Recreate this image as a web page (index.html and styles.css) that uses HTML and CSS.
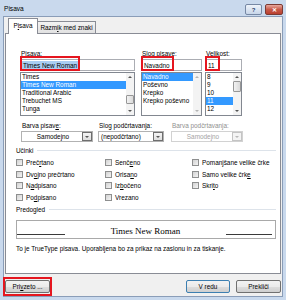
FILE: index.html
```html
<!DOCTYPE html>
<html lang="sl">
<head>
  <meta charset="UTF-8" />
  <title>Pisava</title>
  <link rel="stylesheet" href="styles.css">
</head>
<body>

  <div class="okno">
    <div class="naslov">
      <span class="naslov-besedilo">Pisava</span>
      <span class="gumb-pomoc">?</span>
      <span class="gumb-zapri">&#x2715;</span>
    </div>

    <div class="dialog">
      <div class="zavihki">
        <div class="zavihek izbran">P<u>i</u>sava</div>
        <div class="zavihek drugi">Razm<u>i</u>k med znaki</div>
      </div>

      <div class="plosca">
        <!-- pisava, slog, velikost -->
        <div class="vrsta-pisave">
          <div class="stolpec st-pisava">
            <label>P<u>i</u>sava:</label>
            <div class="polje">
              <span class="oznaceno">Times New Roman</span>
              <span class="rdeci-okvir okvir-pisava"></span>
            </div>
            <div class="seznam">
              <ul>
                <li>Times</li>
                <li class="izbran">Times New Roman</li>
                <li>Traditional Arabic</li>
                <li>Trebuchet MS</li>
                <li>Tunga</li>
              </ul>
              <div class="drsnik">
                <div class="puscica"><span class="gor"></span></div>
                <div class="steza"><div class="rocaj rocaj-pisava"></div></div>
                <div class="puscica"><span class="dol"></span></div>
              </div>
            </div>
          </div>

          <div class="stolpec st-slog">
            <label>Slog pisave:</label>
            <div class="polje">
              <span>Navadno</span>
              <span class="rdeci-okvir okvir-slog"></span>
            </div>
            <div class="seznam">
              <ul>
                <li class="izbran">Navadno</li>
                <li>Poševno</li>
                <li>Krepko</li>
                <li>Krepko poševno</li>
              </ul>
              <div class="drsnik onemogocen">
                <div class="puscica"><span class="gor"></span></div>
                <div class="steza"></div>
                <div class="puscica"><span class="dol"></span></div>
              </div>
            </div>
          </div>

          <div class="stolpec st-velikost">
            <label><u>V</u>elikost:</label>
            <div class="polje">
              <span>11</span>
              <span class="rdeci-okvir okvir-velikost"></span>
            </div>
            <div class="seznam">
              <ul>
                <li>8</li>
                <li>9</li>
                <li>10</li>
                <li class="izbran">11</li>
                <li>12</li>
              </ul>
              <div class="drsnik">
                <div class="puscica"><span class="gor"></span></div>
                <div class="steza"><div class="rocaj rocaj-velikost"></div></div>
                <div class="puscica"><span class="dol"></span></div>
              </div>
            </div>
          </div>
        </div>

        <!-- barve in podcrtavanje -->
        <div class="vrsta-barve">
          <div class="stolpec st-barva">
            <label>Barva pisav<u>e</u>:</label>
            <div class="spustni">
              <span class="spustni-besedilo sredina">Samodejno</span>
              <span class="spustni-gumb"><span class="dol"></span></span>
            </div>
          </div>
          <div class="stolpec st-podcrt">
            <label>Slog podčrtavanja:</label>
            <div class="spustni">
              <span class="spustni-besedilo">(nepodčrtano)</span>
              <span class="spustni-gumb"><span class="dol"></span></span>
            </div>
          </div>
          <div class="stolpec st-barva-podcrt sivo">
            <label>Barva podčrtavanja:</label>
            <div class="spustni onemogocen">
              <span class="spustni-besedilo sredina">Samodejno</span>
              <span class="spustni-gumb"><span class="dol"></span></span>
            </div>
          </div>
        </div>

        <div class="skupina">Učinki</div>
        <div class="ucinki">
          <div class="potrditev"><span class="kvadrat"></span>Preč<u>r</u>tano</div>
          <div class="potrditev"><span class="kvadrat"></span>Senč<u>e</u>no</div>
          <div class="potrditev"><span class="kvadrat"></span>Pomanjšane velike črke</div>
          <div class="potrditev"><span class="kvadrat"></span>Dv<u>o</u>jno prečrtano</div>
          <div class="potrditev"><span class="kvadrat"></span>Orisa<u>n</u>o</div>
          <div class="potrditev"><span class="kvadrat"></span>Samo velike črk<u>e</u></div>
          <div class="potrditev"><span class="kvadrat"></span>N<u>a</u>dpisano</div>
          <div class="potrditev"><span class="kvadrat"></span>Iz<u>b</u>očeno</div>
          <div class="potrditev"><span class="kvadrat"></span>Skri<u>t</u>o</div>
          <div class="potrditev"><span class="kvadrat"></span>Po<u>d</u>pisano</div>
          <div class="potrditev"><span class="kvadrat"></span>Vrezano</div>
        </div>

        <div class="skupina">Predogled</div>
        <div class="predogled">
          <span class="osnovnica levo"></span>
          <span class="vzorec">Times New Roman</span>
          <span class="osnovnica desno"></span>
        </div>
        <p class="opis">To je TrueType pisava. Uporabljena bo za prikaz na zaslonu in za tiskanje.</p>
      </div>

      <div class="gumbi">
        <button class="gumb gumb-privzeto">Pri<u>v</u>zeto ...<span class="rdeci-okvir okvir-gumb"></span></button>
        <button class="gumb gumb-vredu">V redu</button>
        <button class="gumb gumb-preklici">Prekliči</button>
      </div>
    </div>
  </div>

</body>
</html>
```

FILE: styles.css
```css
* {
  box-sizing: border-box;
  margin: 0;
  padding: 0;
}

body {
  font-family: "Liberation Sans", Arial, sans-serif;
  font-size: 6.4px;
  color: #000;
  background: #fff;
}

u {
  text-decoration-thickness: 1px;
}

/* OKNO */
.okno {
  width: 286px;
  height: 300px;
  background: #c9d9ed;
  padding: 0 3px 3px 3px;
}

.naslov {
  height: 16px;
  display: flex;
  align-items: flex-start;
}

.naslov-besedilo {
  margin: 5px 0 0 1px;
  font-size: 6.6px;
  line-height: 7px;
}

.gumb-pomoc,
.gumb-zapri {
  margin-top: 4px;
  height: 11px;
  border-radius: 2px;
  display: flex;
  align-items: center;
  justify-content: center;
  font-size: 6px;
  font-weight: bold;
}

.gumb-pomoc {
  margin-left: auto;
  width: 17px;
  border: 1px solid #7688a4;
  background: linear-gradient(#eef3fa, #c8d6e9);
  color: #2c4670;
}

.gumb-zapri {
  margin-left: 3px;
  width: 18px;
  border: 1px solid #7b3a33;
  background: linear-gradient(#e8a99f, #c85a4a 50%, #b9402f);
  color: #fff;
}

.dialog {
  height: 281px;
  border: 1px solid #8a9db8;
  background: #f0f0f0;
  padding: 0 1px;
}

/* ZAVIHKI */
.zavihki {
  display: flex;
  align-items: flex-end;
  height: 15px;
  margin-top: 1px;
  padding-left: 3px;
}

.zavihek {
  height: 12px;
  border: 1px solid #898c95;
  border-bottom: none;
  background: linear-gradient(#f3f3f3, #e1e1e1);
  display: flex;
  align-items: center;
  justify-content: center;
}

.zavihek.izbran {
  width: 30px;
  height: 16px;
  margin-bottom: -1px;
  background: #fff;
  position: relative;
  z-index: 1;
  padding-bottom: 2px;
}

.zavihek.drugi {
  width: 59px;
  margin-left: -1px;
}

.plosca {
  height: 241px;
  border: 1px solid #898c95;
  background: #fff;
  padding: 15px 4px 0 10px;
}

/* PISAVA / SLOG / VELIKOST */
.vrsta-pisave {
  display: flex;
  margin-left: 4px;
}

.stolpec label {
  display: block;
  height: 9px;
  line-height: 9px;
  margin-bottom: 1px;
  padding-left: 1px;
}

.st-pisava { width: 115px; margin-right: 6px; }
.st-slog { width: 61px; margin-right: 3px; }
.st-velikost { width: 37px; }

.polje {
  position: relative;
  height: 12px;
  border: 1px solid #abadb3;
  margin-bottom: 1px;
  padding-left: 2px;
  display: flex;
  align-items: center;
}

.oznaceno {
  background: #a9cdf2;
  padding: 1px 1px;
  margin-left: -1px;
}

.rdeci-okvir {
  position: absolute;
  top: -4px;
  left: -1px;
  height: 15px;
  border: 2px solid #e5161f;
}

.okvir-pisava { width: 60px; }
.okvir-slog { width: 33px; }
.okvir-velikost { width: 15px; }

.seznam {
  height: 44px;
  border: 1px solid #828790;
  display: flex;
}

.seznam ul {
  flex: 1;
  list-style: none;
  overflow: hidden;
}

.seznam li {
  height: 8px;
  line-height: 8px;
  padding-left: 1px;
  white-space: nowrap;
}

.seznam li.izbran {
  background: #3399ff;
  color: #fff;
}

.drsnik {
  width: 8px;
  display: flex;
  flex-direction: column;
  background: #f3f3f3;
}

.puscica {
  height: 8px;
  display: flex;
  align-items: center;
  justify-content: center;
}

.steza {
  flex: 1;
}

.gor,
.dol {
  width: 0;
  height: 0;
  border-left: 2px solid transparent;
  border-right: 2px solid transparent;
}

.gor { border-bottom: 2px solid #555; }
.dol { border-top: 2px solid #555; }

.onemogocen .gor { border-bottom-color: #b4b4b4; }
.onemogocen .dol { border-top-color: #b4b4b4; }

.rocaj {
  border: 1px solid #979797;
  border-radius: 1px;
  background: linear-gradient(90deg, #f2f2f2, #dadada);
}

.rocaj-pisava { margin-top: 14px; height: 9px; }
.rocaj-velikost { margin-top: 0; height: 11px; }

/* BARVE */
.vrsta-barve {
  display: flex;
  margin: 5px 0 0 5px;
}

.st-barva { width: 72px; margin-right: 5px; }
.st-podcrt { width: 66px; margin-right: 7px; }
.st-barva-podcrt { width: 72px; }

.sivo label {
  color: #8f8f8f;
}

.spustni {
  height: 11px;
  border: 1px solid #b2b2b2;
  background: #fff;
  display: flex;
}

.spustni-besedilo {
  flex: 1;
  line-height: 9px;
  padding-left: 2px;
  white-space: nowrap;
}

.spustni-besedilo.sredina {
  text-align: center;
}

.spustni-gumb {
  width: 10px;
  border: 1px solid #6e6e6e;
  background: linear-gradient(#f4f4f4, #dedede);
  display: flex;
  align-items: center;
  justify-content: center;
}

.spustni.onemogocen {
  border-color: #d2d2d2;
  color: #a4a4a4;
}

.spustni.onemogocen .spustni-gumb {
  border-color: #c4c4c4;
  background: #f4f4f4;
}

.spustni.onemogocen .dol {
  border-top-color: #b8b8b8;
}

/* SKUPINE */
.skupina {
  display: flex;
  align-items: center;
  height: 9px;
  margin-top: 4px;
}

.skupina::after {
  content: "";
  flex: 1;
  height: 1px;
  margin-left: 4px;
  background: #dde3ea;
}

.ucinki {
  display: grid;
  grid-template-columns: 89px 87px 1fr;
  grid-auto-rows: 11.5px;
  margin-top: 2px;
}

.potrditev {
  display: flex;
  align-items: center;
  white-space: nowrap;
}

.kvadrat {
  width: 7px;
  height: 7px;
  margin-right: 3px;
  border: 1px solid #8e8f8f;
  background: linear-gradient(135deg, #d2d2d2, #f4f4f4);
}

.ucinki + .skupina {
  margin-top: 2px;
}

/* PREDOGLED */
.predogled {
  height: 19px;
  margin-top: 6px;
  border: 1px solid #a9a9a9;
  display: flex;
  align-items: flex-start;
  padding-right: 3px;
}

.osnovnica {
  height: 1px;
  margin-top: 13px;
  background: #3a3a3a;
}

.osnovnica.levo { width: 48px; }
.osnovnica.desno { width: 46px; }

.vzorec {
  flex: 1;
  text-align: center;
  font-family: "Liberation Serif", "Times New Roman", serif;
  font-size: 9px;
  line-height: 9px;
  margin-top: 6px;
}

.opis {
  margin-top: 5px;
  line-height: 9px;
}

/* GUMBI */
.gumbi {
  display: flex;
  margin-top: 6px;
}

.gumb {
  position: relative;
  height: 13px;
  border: 1px solid #707070;
  border-radius: 2px;
  background: linear-gradient(#f2f2f2 0%, #ebebeb 50%, #dddddd 51%, #cfcfcf 100%);
  font-family: "Liberation Sans", Arial, sans-serif;
  font-size: 6.4px;
  color: #000;
}

.gumb-privzeto { width: 45px; }

.gumb-vredu {
  width: 44px;
  margin-left: auto;
  border-color: #3c7fb1;
}

.gumb-preklici {
  width: 45px;
  margin-left: 6px;
}

.okvir-gumb {
  top: -4px;
  left: -3px;
  width: 49px;
  height: 19px;
}
```
